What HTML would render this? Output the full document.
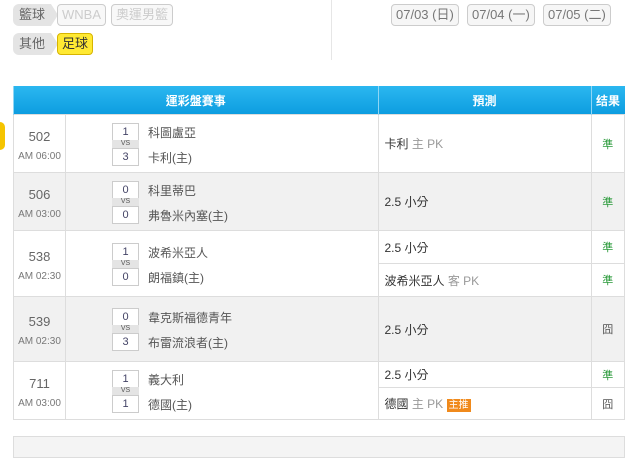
<!DOCTYPE html><html><head><meta charset="utf-8"><style>
body{margin:0;width:640px;height:450px;background:#fff;font-family:"Liberation Sans","Noto Sans CJK TC",sans-serif;position:relative;overflow:hidden;color:#333}
.a{position:absolute}
.lbl{position:absolute;height:22px;line-height:22px;font-size:13px;color:#666;background:#e4e4e4;border-radius:6px 0 0 6px;padding:0 6px}
.lbl:after{content:"";position:absolute;right:-7px;top:0;border-left:7px solid #e4e4e4;border-top:11px solid transparent;border-bottom:11px solid transparent}
.tag{position:absolute;height:20px;line-height:20px;font-size:13px;border:1px solid #ccc;border-radius:4px;padding:0 4px;color:#ccc;background:#f8f8f8}
.y{background:#ffe933;border-color:#d7b400;color:#333}
.d{position:absolute;top:4px;height:20px;line-height:20px;font-size:13px;border:1px solid #ccc;border-radius:4px;padding:0 4px;color:#777;background:#f6f6f6}
table{position:absolute;left:13px;top:86px;border-collapse:collapse;width:612px;font-size:12px}
th{background:linear-gradient(#2bb7f0,#0d9de0);color:#fff;height:28px;padding:0;font-size:12px;border-left:1px solid #8fd6f5}
td{border:1px solid #ddd;padding:0}
.g td{background:#f1f1f1}
.n{text-align:center;color:#666;font-size:13px;line-height:26px}
.n small{font-size:10px;color:#777;display:block;line-height:14px}
.sc{position:relative;height:42px;margin-left:46px}
.bx{position:absolute;left:0;width:25px;height:16px;border:1px solid #ccc;background:#fff;text-align:center;font-size:11px;line-height:16px;color:#446}
.vs{position:absolute;left:0;top:17px;width:27px;height:8px;background:#e4e4e4;font-size:7px;line-height:8px;text-align:center;color:#555}
.nm{position:absolute;left:36px;font-size:12px;color:#555}
.p{padding-left:6px;color:#333}
.p span{color:#999}
.r{text-align:center;font-size:11px}
.ok{color:#2a9a3a}
</style></head><body>
<div class="a" style="left:0;top:122px;width:5px;height:28px;background:#f5c400;border-radius:0 14px 14px 0"></div>
<div class="lbl" style="left:13px;top:4px">籃球</div>
<div class="tag" style="left:57px;top:4px">WNBA</div>
<div class="tag" style="left:111px;top:4px">奧運男籃</div>
<div class="lbl" style="left:13px;top:33px">其他</div>
<div class="tag y" style="left:57px;top:33px">足球</div>
<div class="a" style="left:331px;top:0;width:1px;height:60px;background:#e6e6e6"></div>
<div class="d y" style="left:391px">07/03 (日)</div>
<div class="d" style="left:467px">07/04 (一)</div>
<div class="d" style="left:543px">07/05 (二)</div>
<table>
<tr><th colspan="2">運彩盤賽事</th><th style="width:212px">預測</th><th style="width:33px">结果</th></tr>
<tr style="height:58px"><td class="n" style="width:51px">502<small>AM 06:00</small></td><td><div class="sc"><div class="bx" style="top:0">1</div><div class="vs">VS</div><div class="bx" style="top:25px">3</div><div class="nm" style="top:1px">科圖盧亞</div><div class="nm" style="top:26px">卡利(主)</div></div></td><td class="p">卡利 <span>主 PK</span></td><td class="r ok">準</td></tr>
<tr class="g" style="height:58px"><td class="n">506<small>AM 03:00</small></td><td><div class="sc"><div class="bx" style="top:0">0</div><div class="vs">VS</div><div class="bx" style="top:25px">0</div><div class="nm" style="top:1px">科里蒂巴</div><div class="nm" style="top:26px">弗魯米內塞(主)</div></div></td><td class="p">2.5 小分</td><td class="r ok">準</td></tr>
<tr style="height:33px"><td class="n" rowspan="2">538<small>AM 02:30</small></td><td rowspan="2"><div class="sc"><div class="bx" style="top:0">1</div><div class="vs">VS</div><div class="bx" style="top:25px">0</div><div class="nm" style="top:1px">波希米亞人</div><div class="nm" style="top:26px">朗福鎮(主)</div></div></td><td class="p">2.5 小分</td><td class="r ok">準</td></tr>
<tr style="height:33px"><td class="p">波希米亞人 <span>客 PK</span></td><td class="r ok">準</td></tr>
<tr class="g" style="height:65px"><td class="n">539<small>AM 02:30</small></td><td><div class="sc"><div class="bx" style="top:0">0</div><div class="vs">VS</div><div class="bx" style="top:25px">3</div><div class="nm" style="top:1px">韋克斯福德青年</div><div class="nm" style="top:26px">布雷流浪者(主)</div></div></td><td class="p">2.5 小分</td><td class="r" style="color:#555">囧</td></tr>
<tr style="height:26px"><td class="n" rowspan="2">711<small>AM 03:00</small></td><td rowspan="2"><div class="sc"><div class="bx" style="top:0">1</div><div class="vs">VS</div><div class="bx" style="top:25px">1</div><div class="nm" style="top:1px">義大利</div><div class="nm" style="top:26px">德國(主)</div></div></td><td class="p">2.5 小分</td><td class="r ok">準</td></tr>
<tr style="height:32px"><td class="p">德國 <span>主 PK</span> <b style="background:#f08a1c;color:#fff;font-weight:normal;font-size:10px;padding:1px 2px">主推</b></td><td class="r" style="color:#555">囧</td></tr>
</table>
<div class="a" style="left:13px;top:436px;width:610px;height:20px;border:1px solid #ddd;background:#f4f4f4"></div>
</body></html>
